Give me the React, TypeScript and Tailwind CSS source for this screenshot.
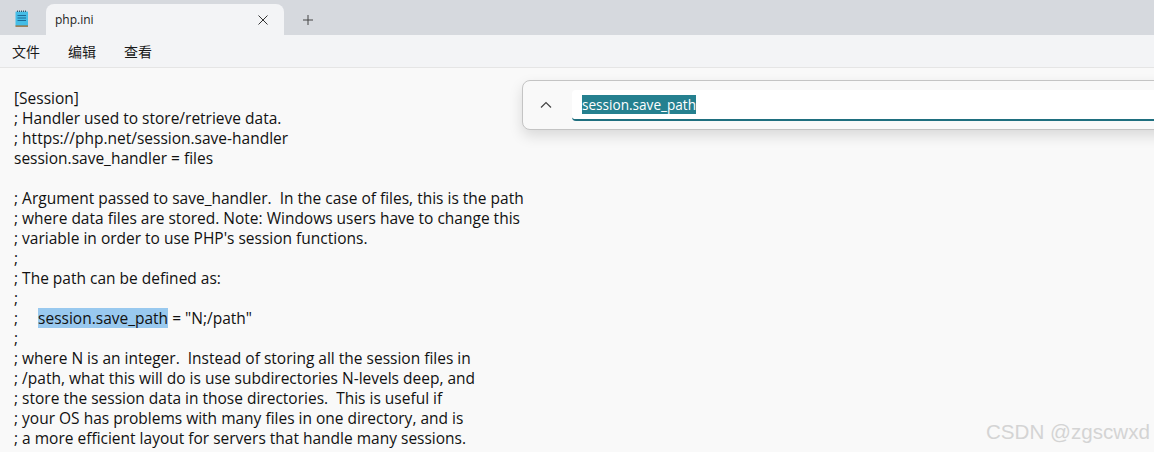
const lines = [
  "[Session]",
  "; Handler used to store/retrieve data.",
  "; https://php.net/session.save-handler",
  "session.save_handler = files",
  "",
  "; Argument passed to save_handler.  In the case of files, this is the path",
  "; where data files are stored. Note: Windows users have to change this",
  "; variable in order to use PHP's session functions.",
  ";",
  "; The path can be defined as:",
  ";",
  "HL",
  ";",
  "; where N is an integer.  Instead of storing all the session files in",
  "; /path, what this will do is use subdirectories N-levels deep, and",
  "; store the session data in those directories.  This is useful if",
  "; your OS has problems with many files in one directory, and is",
  "; a more efficient layout for servers that handle many sessions.",
];

function NotepadIcon() {
  return (
    <svg width="14" height="18" viewBox="0 0 14 18" className="ml-[15px] mt-[10px] shrink-0">
      <rect x="0.5" y="1.5" width="12.5" height="15" rx="0.5" fill="#45bde6" />
      <rect x="0.5" y="15.5" width="12.5" height="1.2" fill="#a8621f" />
      <path d="M2.5 0.5v1.5M4.5 0.5v1.5M6.5 0.5v1.5M8.5 0.5v1.5M10.5 0.5v1.5" stroke="#33566b" strokeWidth="1" />
      <path d="M2.5 5.5h8.5M2.5 8h8.5M2.5 10.5h8.5" stroke="#1c6a97" strokeWidth="1" />
    </svg>
  );
}

export default function App() {
  return (
    <div className="relative h-[452px] w-[1154px] overflow-hidden bg-[#f9f9f9] text-[#1a1a1a] font-['Open_Sans','Noto_Sans_CJK_SC',sans-serif]">
      <div className="flex h-[35px] items-start bg-[#d6d9de]">
        <NotepadIcon />
        <div className="ml-[17px] mt-[4px] flex h-[31px] w-[238px] items-center justify-between rounded-t-lg bg-[#f3f4f6] pl-[9px] pr-[15px]">
          <span className="text-[12px] text-[#222]">php.ini</span>
          <svg width="12" height="12" viewBox="0 0 12 12">
            <path d="M1.5 1.5l9 9M10.5 1.5l-9 9" stroke="#333" strokeWidth="1" fill="none" />
          </svg>
        </div>
        <svg width="12" height="12" viewBox="0 0 12 12" className="ml-[18px] mt-[14px]">
          <path d="M6 1v10M1 6h10" stroke="#444" strokeWidth="1" fill="none" />
        </svg>
      </div>
      <div className="flex h-[33px] items-center gap-[28px] border-b border-[#e5e5e5] bg-[#f3f4f6] pl-[12px] text-[14px] leading-none font-['Noto_Sans_CJK_SC',sans-serif]">
        <span>文件</span>
        <span>编辑</span>
        <span>查看</span>
      </div>
      <div className="whitespace-pre pl-[14px] pt-[20px] text-[15.5px] leading-[20px] text-[#111]">
        {lines.map((l, i) =>
          l === "HL" ? (
            <div key={i} className="h-[20px]">
              {";"}
              <span className="ml-[20px] inline-block h-[20px] bg-[#99c9ef]">session.save_path</span>
              {' = "N;/path"'}
            </div>
          ) : (
            <div key={i} className="h-[20px]">{l}</div>
          )
        )}
      </div>
      <div className="absolute left-[522px] top-[80px] flex h-[50px] w-[700px] items-center rounded-lg border border-[#c4c4c4] bg-[#f9f9f9] shadow-[0_6px_14px_rgba(0,0,0,0.13)]">
        <svg width="12" height="8" viewBox="0 0 12 8" className="ml-[17px]">
          <path d="M1 6.5l5-5 5 5" stroke="#444" strokeWidth="1.2" fill="none" />
        </svg>
        <div className="ml-[20px] flex h-[31px] flex-1 items-center rounded-[4px] border-b-2 border-[#1f6f7f] bg-white pl-[10px] text-[13.6px]">
          <span className="bg-[#25808f] leading-[19px] text-white">session.save_path</span>
        </div>
      </div>
      <div className="absolute left-[986px] top-[419px] text-[20.6px] leading-[26px] text-[#d4d4d4] font-['Liberation_Sans',sans-serif]">
        CSDN @zgscwxd
      </div>
    </div>
  );
}
